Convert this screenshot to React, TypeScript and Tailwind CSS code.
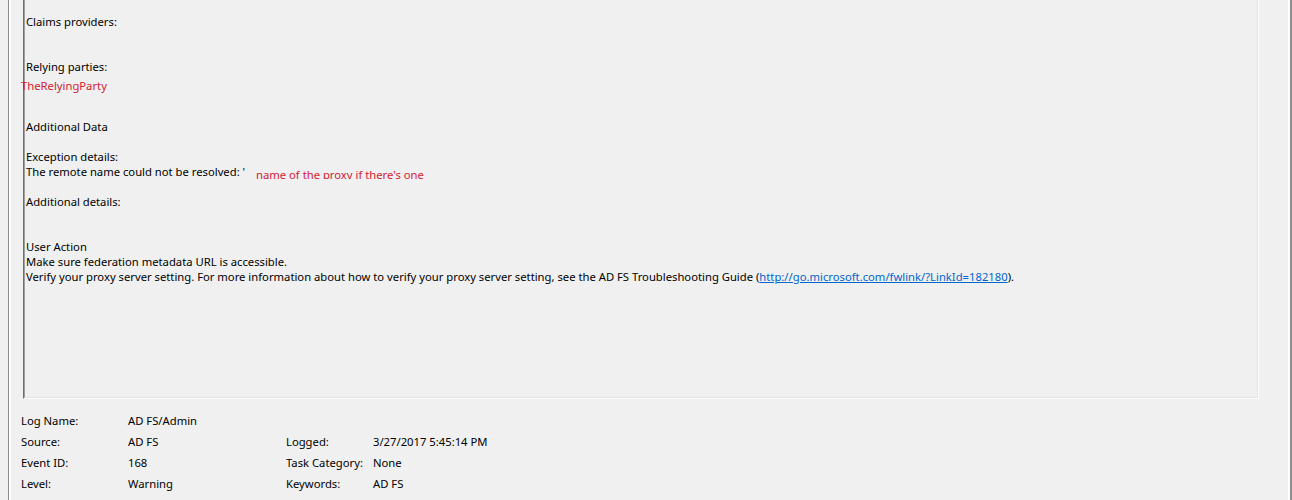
import React from 'react';

const bodyLines: React.ReactNode[] = [
  'Claims providers:',
  '',
  '',
  'Relying parties:',
  '',
  '',
  '',
  'Additional Data',
  '',
  'Exception details:',
  "The remote name could not be resolved: '",
  '',
  'Additional details:',
  '',
  '',
  'User Action',
  'Make sure federation metadata URL is accessible.',
  <>
    Verify your proxy server setting. For more information about how to verify your proxy server setting, see the AD FS Troubleshooting Guide (
    <a href="#" className="text-[#0066cc] underline">http://go.microsoft.com/fwlink/?LinkId=182180</a>
    ).
  </>,
];

const fields = [
  { label: 'Log Name:', value: 'AD FS/Admin', label2: '', value2: '' },
  { label: 'Source:', value: 'AD FS', label2: 'Logged:', value2: '3/27/2017 5:45:14 PM' },
  { label: 'Event ID:', value: '168', label2: 'Task Category:', value2: 'None' },
  { label: 'Level:', value: 'Warning', label2: 'Keywords:', value2: 'AD FS' },
];

export default function App() {
  return (
    <div className="relative w-[1292px] h-[500px] overflow-hidden bg-[#f0f0f0] text-[11.25px] text-black [font-family:'Noto_Sans',sans-serif]">
      <div className="flex h-full pl-[8px]">
        {/* Outer pane edges */}
        <div className="flex flex-1 border-l border-r-2 border-[#8c8c8c]">
          <div className="flex-1 border-l-2 border-r-2 border-white pl-[12px] pr-[29px]">
            {/* Description box */}
            <div className="h-[399px] border-l border-b border-r border-l-[#6d6d6d] border-b-white border-r-white">
              <div className="h-full border-l border-b border-r border-l-[#a0a0a0] border-b-[#e3e3e3] border-r-[#e3e3e3] pl-[1px] pt-[14px]">
                {bodyLines.map((line, i) => (
                  <div key={i} className="h-[15px] leading-[15px] whitespace-nowrap">
                    {line}
                  </div>
                ))}
              </div>
            </div>

            {/* Event properties */}
            <div className="mt-[11px] ml-[-2px]">
              {fields.map((f) => (
                <div key={f.label} className="grid grid-cols-[107px_158px_87px_1fr] h-[21px] items-center leading-[15px] whitespace-nowrap">
                  <span>{f.label}</span>
                  <span>{f.value}</span>
                  <span>{f.label2}</span>
                  <span>{f.value2}</span>
                </div>
              ))}
            </div>
          </div>
        </div>
      </div>

      {/* Red annotations pasted over the screenshot */}
      <div className="absolute left-[21px] top-[78px] leading-[15px] text-[#d42030]">TheRelyingParty</div>
      <div className="absolute left-[256px] top-[167px] h-[12px] overflow-hidden leading-[15px] text-[#d42030]">
        name of the proxy if there's one
      </div>
    </div>
  );
}
